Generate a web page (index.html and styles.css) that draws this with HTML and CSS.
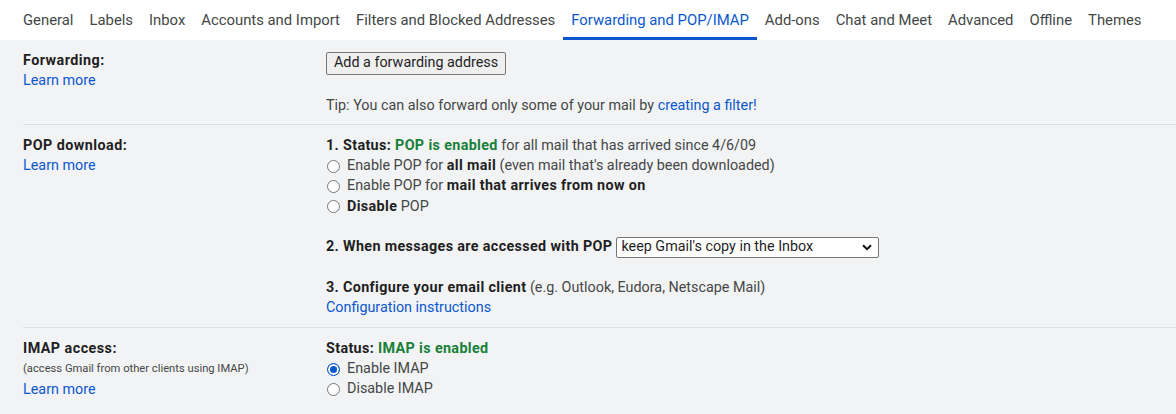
FILE: index.html
```html
<!DOCTYPE html>
<html lang="en">
<head>
<meta charset="utf-8">
<title>Settings - Forwarding and POP/IMAP</title>
<link rel="stylesheet" href="styles.css">
</head>
<body>
<nav class="tabs">
  <a class="tab">General</a>
  <a class="tab">Labels</a>
  <a class="tab">Inbox</a>
  <a class="tab">Accounts and Import</a>
  <a class="tab">Filters and Blocked Addresses</a>
  <a class="tab active">Forwarding and POP/IMAP</a>
  <a class="tab">Add-ons</a>
  <a class="tab">Chat and Meet</a>
  <a class="tab">Advanced</a>
  <a class="tab">Offline</a>
  <a class="tab">Themes</a>
</nav>

<main class="settings">
  <section class="row">
    <div class="label">
      <div class="title">Forwarding:</div>
      <a class="link">Learn more</a>
    </div>
    <div class="value">
      <div class="btn-line"><button class="btn">Add a forwarding address</button></div>
      <div class="tip">Tip: You can also forward only some of your mail by <a class="link">creating a filter!</a></div>
    </div>
  </section>

  <section class="row">
    <div class="label">
      <div class="title">POP download:</div>
      <a class="link">Learn more</a>
    </div>
    <div class="value">
      <div class="group">
        <div><b>1. Status: </b><b class="ok">POP is enabled</b> for all mail that has arrived since 4/6/09</div>
        <label class="opt"><span class="radio"></span><span>Enable POP for <b>all mail</b> (even mail that's already been downloaded)</span></label>
        <label class="opt"><span class="radio"></span><span>Enable POP for <b>mail that arrives from now on</b></span></label>
        <label class="opt"><span class="radio"></span><span><b>Disable</b> POP</span></label>
      </div>
      <div class="group">
        <div class="sel-line"><b>2. When messages are accessed with POP</b>
          <span class="select">keep Gmail's copy in the Inbox
            <svg class="chev" width="10" height="7" viewBox="0 0 10 7"><path d="M1 1.2 L5 5.2 L9 1.2" fill="none" stroke="#111" stroke-width="2"/></svg>
          </span>
        </div>
      </div>
      <div class="group">
        <div><b>3. Configure your email client</b> (e.g. Outlook, Eudora, Netscape Mail)</div>
        <a class="link">Configuration instructions</a>
      </div>
    </div>
  </section>

  <section class="row last">
    <div class="label">
      <div class="title">IMAP access:</div>
      <div class="small">(access Gmail from other clients using IMAP)</div>
      <a class="link">Learn more</a>
    </div>
    <div class="value">
      <div><b>Status: </b><b class="ok">IMAP is enabled</b></div>
      <label class="opt"><span class="radio checked"></span><span>Enable IMAP</span></label>
      <label class="opt"><span class="radio"></span><span>Disable IMAP</span></label>
    </div>
  </section>
</main>
</body>
</html>
```

FILE: styles.css
```css
html, body {
  margin: 0;
  padding: 0;
}
body {
  background: #f2f3f5;
  font-family: Roboto, "Liberation Sans", Arial, sans-serif;
  font-size: 14.35px;
  line-height: 20px;
  color: #444746;
}
b {
  font-weight: 700;
  color: #1f1f1f;
  letter-spacing: 0.35px;
}
.tabs {
  display: flex;
  height: 40px;
  background: #ffffff;
  padding-left: 15px;
}
.tab {
  display: flex;
  align-items: center;
  padding: 0 8px;
  color: #444746;
  font-size: 14.85px;
  box-sizing: border-box;
  border-bottom: 3px solid transparent;
  padding-top: 3px;
}
.tab.active {
  color: #0b57d0;
  border-bottom-color: #0b57d0;
}
.settings {
  padding: 1px 0 0 23px;
}
.row {
  display: grid;
  grid-template-columns: 303px 1fr;
  padding: 10px 0 9px;
  border-bottom: 1px solid #dcdee1;
}
.row:first-child {
  padding-bottom: 8px;
}
.row + .row {
  padding-top: 11px;
}
.row.last {
  border-bottom: none;
}
.label {
  display: flex;
  flex-direction: column;
  align-items: flex-start;
}
.title {
  font-weight: 700;
  color: #1f1f1f;
  letter-spacing: 0.45px;
}
.small {
  font-size: 11.2px;
  color: #444746;
}
.link {
  color: #0b57d0;
  text-decoration: none;
  cursor: pointer;
}
.label .small + .link {
  margin-top: 1px;
}
.value {
  display: flex;
  flex-direction: column;
  align-items: flex-start;
}
.btn-line {
  height: 24px;
  display: flex;
  align-items: center;
}
.btn {
  font-family: inherit;
  font-size: 14.35px;
  line-height: 18px;
  color: #1f1f1f;
  background: #efefef;
  border: 1px solid #767676;
  border-radius: 2px;
  padding: 1px 7px;
  height: 23px;
  margin: 0;
}
.tip {
  margin-top: 21px;
}
.group {
  display: flex;
  flex-direction: column;
  align-items: flex-start;
}
.group + .group {
  margin-top: 20px;
}
.ok {
  color: #188038;
}
.opt {
  display: flex;
  align-items: center;
  gap: 7px;
  height: 20.3px;
}
.radio {
  width: 11px;
  height: 11px;
  border: 1px solid #767676;
  border-radius: 50%;
  background: #fff;
  margin-left: 1px;
  flex: none;
  box-sizing: content-box;
}
.radio.checked {
  border-color: #0b57d0;
  background: #0b57d0;
  box-shadow: inset 0 0 0 2px #fff;
}
.sel-line {
  display: flex;
  align-items: center;
  gap: 4px;
}
.select {
  position: relative;
  display: inline-flex;
  align-items: center;
  box-sizing: border-box;
  width: 263px;
  height: 21px;
  padding: 0 4px;
  background: #fff;
  border: 1px solid #767676;
  border-radius: 2px;
  color: #1f1f1f;
  font-size: 14.35px;
}
.chev {
  position: absolute;
  right: 6px;
  top: 6px;
}
```
